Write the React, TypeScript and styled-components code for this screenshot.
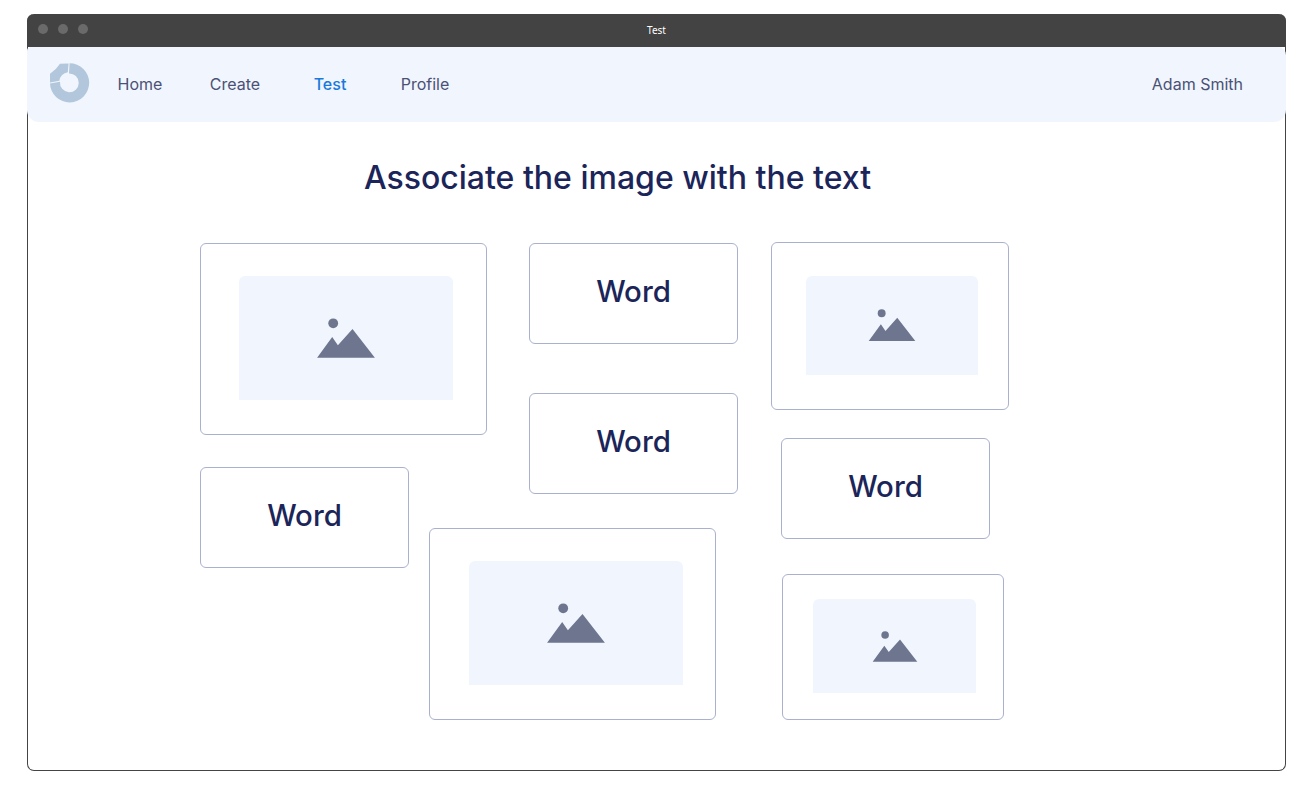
import React from "react";
import styled, { createGlobalStyle } from "styled-components";

const Global = createGlobalStyle`
  html, body { margin: 0; padding: 0; background: #fff; }
  body { font-family: Inter, "Liberation Sans", sans-serif; }
`;

const Page = styled.div`
  width: 1304px;
  height: 795px;
  padding: 14px 18px 24px 27px;
  box-sizing: border-box;
  overflow: hidden;
`;

const Frame = styled.div`
  width: 1259px;
  height: 757px;
  box-sizing: border-box;
  border: 1px solid #444;
  border-top: 0;
  border-radius: 7px;
  background: #fff;
  display: flex;
  flex-direction: column;
`;

const TitleBar = styled.div`
  position: relative;
  height: 33px;
  flex: none;
  margin: 0 -1px;
  border-radius: 7px 7px 0 0;
  background: #434343;
  display: flex;
  align-items: center;
  justify-content: center;
  padding-bottom: 2px;
  box-sizing: border-box;
`;

const Dots = styled.div`
  position: absolute;
  left: 11px;
  top: 10px;
  display: flex;
  gap: 10px;
`;

const Dot = styled.span`
  width: 10px;
  height: 10px;
  border-radius: 50%;
  background: #6a6a6a;
`;

const TitleText = styled.span`
  font: 400 10px "Noto Sans", "Open Sans", sans-serif;
  color: #fff;
`;

const Nav = styled.nav`
  height: 75px;
  flex: none;
  margin: 0 -1px;
  box-sizing: border-box;
  background: #f1f5fd;
  border-radius: 4px 8px 12px 12px;
  display: flex;
  align-items: center;
  padding: 0 43px 2px 23px;
`;

const Logo = styled.svg`
  width: 40px;
  height: 40px;
  flex: none;
  margin: 0 2.5px 2px 0;
`;

const NavLink = styled.a<{ $active?: boolean }>`
  width: 95px;
  flex: none;
  text-align: center;
  font-size: 16px;
  line-height: 20px;
  color: ${(p) => (p.$active ? "#1a79dc" : "#4a5175")};
  font-weight: ${(p) => (p.$active ? 500 : 400)};
`;

const User = styled.span`
  margin-left: auto;
  font-size: 16px;
  line-height: 20px;
  color: #4a5175;
`;

const Heading = styled.h1`
  margin: 0;
  padding-top: 36px;
  width: 1179px;
  text-align: center;
  font-size: 32px;
  line-height: 40px;
  font-weight: 500;
  color: #1b2559;
`;

const Canvas = styled.div`
  position: relative;
  flex: 1;
`;

const Card = styled.div<{ $x: number; $y: number; $w: number; $h: number }>`
  position: absolute;
  left: ${(p) => p.$x}px;
  top: ${(p) => p.$y}px;
  width: ${(p) => p.$w}px;
  height: ${(p) => p.$h}px;
  box-sizing: border-box;
  border: 1px solid #a9b1cf;
  border-radius: 6px;
  background: #fff;
`;

const WordCard = styled(Card)`
  display: flex;
  align-items: center;
  justify-content: center;
  font-size: 29.4px;
  font-weight: 450;
  color: #1b2559;
  padding-bottom: 5px;
`;

const ImageBox = styled.div<{ $l: number; $t: number; $w: number; $h: number }>`
  margin-left: ${(p) => p.$l}px;
  margin-top: ${(p) => p.$t}px;
  width: ${(p) => p.$w}px;
  height: ${(p) => p.$h}px;
  background: #f1f5fd;
  border-radius: 6px 6px 0 0;
  display: flex;
  align-items: center;
  justify-content: center;
`;

const Mountain = styled.svg<{ $w: number; $dx: number }>`
  width: ${(p) => p.$w}px;
  flex: none;
  overflow: visible;
  transform: translateX(${(p) => p.$dx}px);
`;

const MountainIcon = ({ w, dx }: { w: number; dx: number }) => (
  <Mountain $w={w} $dx={dx} viewBox="0 0 57 40">
    <circle cx="15.7" cy="5.3" r="4.9" fill="#6e758f" />
    <polygon points="-0.4,39.7 14.7,19 20.4,27.3 35,11 57.4,39.7" fill="#6e758f" />
  </Mountain>
);

const originY = 122;

const words = [
  { x: 501, y: 243, w: 209, h: 101 },
  { x: 501, y: 393, w: 209, h: 101 },
  { x: 753, y: 438, w: 209, h: 101 },
  { x: 172, y: 467, w: 209, h: 101 },
];

const images = [
  { x: 172, y: 243, w: 287, h: 192, il: 38, it: 32, iw: 214, ih: 124, ic: 57, dx: -0.5 },
  { x: 743, y: 242, w: 238, h: 168, il: 34, it: 33, iw: 172, ih: 99, ic: 46, dx: 0 },
  { x: 401, y: 528, w: 287, h: 192, il: 39, it: 32, iw: 214, ih: 124, ic: 57, dx: -0.5 },
  { x: 754, y: 574, w: 222, h: 146, il: 30, it: 24, iw: 163, ih: 94, ic: 44, dx: 0 },
];

export default function App() {
  return (
    <Page>
      <Global />
      <Frame>
        <TitleBar>
          <Dots>
            <Dot />
            <Dot />
            <Dot />
          </Dots>
          <TitleText>Test</TitleText>
        </TitleBar>
        <Nav>
          <Logo viewBox="0 0 40 40">
            <path
              fill="#b2c7dc"
              d="M19.6 0.2A19.6 19.6 0 1 1 0 20.4L10 18.8A9.4 9.4 0 1 0 19 10.4Z"
            />
            <path
              fill="#b2c7dc"
              d="M18.6 0.4L10 0.8Q6 7 0 10.8L0 19.4L9.4 17.8A9.6 9.6 0 0 1 17.8 9.2Z"
            />
          </Logo>
          <NavLink>Home</NavLink>
          <NavLink>Create</NavLink>
          <NavLink $active>Test</NavLink>
          <NavLink>Profile</NavLink>
          <User>Adam Smith</User>
        </Nav>
        <Canvas>
          <Heading>Associate the image with the text</Heading>
          {words.map((c, i) => (
            <WordCard key={i} $x={c.x} $y={c.y - originY} $w={c.w} $h={c.h}>
              Word
            </WordCard>
          ))}
          {images.map((c, i) => (
            <Card key={i} $x={c.x} $y={c.y - originY} $w={c.w} $h={c.h}>
              <ImageBox $l={c.il} $t={c.it} $w={c.iw} $h={c.ih}>
                <MountainIcon w={c.ic} dx={c.dx} />
              </ImageBox>
            </Card>
          ))}
        </Canvas>
      </Frame>
    </Page>
  );
}
